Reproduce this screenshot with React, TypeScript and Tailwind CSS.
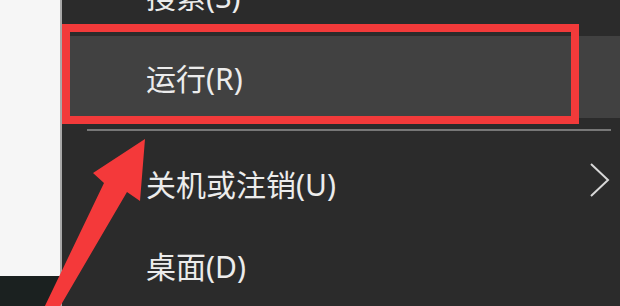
import React from "react";

const font = { fontFamily: '"Noto Sans", "Noto Sans CJK SC", sans-serif' };

function Item({ label, highlight, chevron }: { label: string; highlight?: boolean; chevron?: boolean }) {
  return (
    <div
      className={`relative h-[82px] shrink-0 flex items-center pl-[84px] pt-[4px] text-[30px] leading-none text-[#ececec] ${
        highlight ? "bg-[#414141]" : ""
      }`}
    >
      <span>{label}</span>
      {chevron && (
        <svg className="ml-auto mr-[9px] mt-[-11px]" width="22" height="36" viewBox="0 0 22 36">
          <polyline points="2,2 19,18 2,34" fill="none" stroke="#d8d8d8" strokeWidth="2" />
        </svg>
      )}
      {highlight && (
        <div className="absolute left-0 right-[41px] top-[-12px] bottom-[-6px] border-[8px] border-[#f23a3a]" />
      )}
    </div>
  );
}

export default function App() {
  return (
    <div className="relative w-[620px] h-[306px] overflow-hidden flex" style={font}>
      <div className="w-[60px] flex flex-col">
        <div className="h-[276px] bg-[#f6f6f6]" />
        <div className="flex-1 bg-[#1b2120]" />
      </div>
      <div className="w-[2px] bg-[#a8a8a8]" />
      <div className="flex-1 bg-[#2b2b2b] flex flex-col mt-[-46px]">
        <Item label="搜索(S)" />
        <Item label="运行(R)" highlight />
        <div className="h-[24px] shrink-0 flex items-center pl-[25px] pr-[9px]">
          <div className="h-[2px] w-full bg-[#777777]" />
        </div>
        <Item label="关机或注销(U)" chevron />
        <Item label="桌面(D)" />
      </div>
      <svg className="absolute left-0 top-0 pointer-events-none" width="620" height="306" viewBox="0 0 620 306">
        <polygon
          points="145,139 140,201 127,192 58,310 43,310 104,183 93,173"
          fill="#f4393a"
        />
      </svg>
    </div>
  );
}
